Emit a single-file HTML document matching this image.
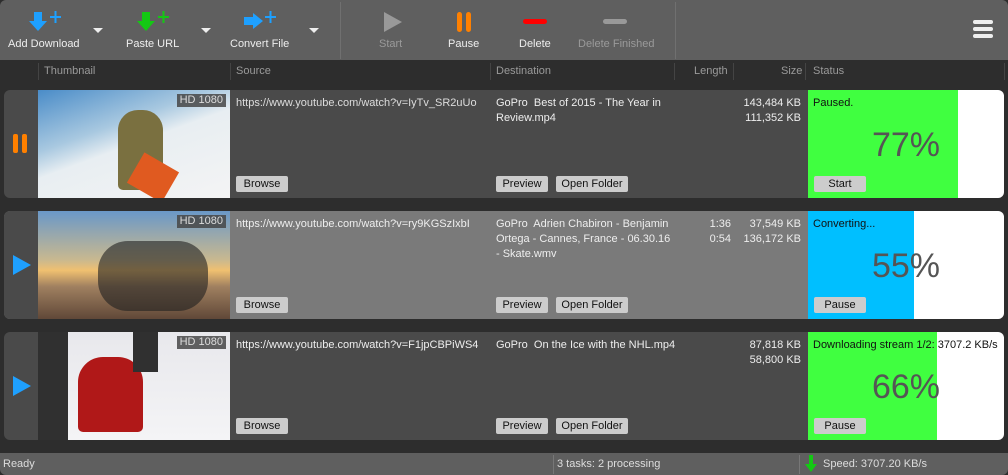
<!DOCTYPE html><html><head><style>
body{margin:0;width:1008px;height:475px;background:#2d2d2d;font-family:"Liberation Sans",sans-serif;font-size:11px;position:relative;overflow:hidden}
.a{position:absolute}
.tb{left:0;top:0;width:1008px;height:60px;background:#5f5f5f;border-radius:6px 6px 0 0}
.lbl{position:absolute;top:38px;color:#eee;font-size:11px;text-align:center}
.dis{color:#9a9a9a}
.hd{color:#9a9a9a;top:65px;font-size:11px}
.sep{position:absolute;top:63px;width:1px;height:17px;background:#444}
.row{left:4px;width:1000px;height:108px;border-radius:6px;overflow:hidden;background:#4a4a4a}
.row>div{position:absolute}
.thumb{left:34px;top:0;width:192px;height:108px}
.hdb{position:absolute;right:4px;top:4px;background:rgba(70,70,70,.85);color:#ddd;font-size:11px;padding:0 3px;line-height:13px}
.txt{color:#eee;font-size:11px;line-height:15px}
.btn{position:absolute;background:#ccc;color:#111;font-size:11px;height:16px;line-height:16px;text-align:center;border-radius:2px}
.st{left:804px;top:0;width:196px;height:108px;background:#fff}
.pct{position:absolute;left:0;width:196px;top:36px;text-align:center;font-size:34px;color:#555}
</style></head><body>
<div class="a tb"></div>
<svg class="a" style="left:0;top:0" width="700" height="60">
<g fill="#1ea0ff"><rect x="34" y="12" width="8" height="10"/><polygon points="29,21 47,21 38,31"/><rect x="50" y="16" width="11" height="2"/><rect x="54.5" y="11" width="2" height="12"/></g>
<g fill="#14c814"><rect x="142" y="12" width="8" height="10"/><polygon points="137,21 155,21 146,31"/><rect x="158" y="16" width="11" height="2"/><rect x="162.5" y="11" width="2" height="12"/></g>
<g fill="#1ea0ff"><rect x="244" y="17" width="10" height="8"/><polygon points="253,13 263,21 253,29"/><rect x="265" y="16" width="11" height="2"/><rect x="269.5" y="11" width="2" height="12"/></g>
<g fill="#eee"><polygon points="93,28 103,28 98,33"/><polygon points="201,28 211,28 206,33"/><polygon points="309,28 319,28 314,33"/></g>
<rect x="340" y="2" width="1" height="57" fill="#707070"/><rect x="675" y="2" width="1" height="57" fill="#707070"/>
<polygon points="384,12 402,22 384,32" fill="#999"/>
<rect x="457" y="12" width="5" height="20" rx="2.5" fill="#ff8000"/><rect x="466" y="12" width="5" height="20" rx="2.5" fill="#ff8000"/>
<rect x="523" y="19" width="24" height="5" rx="2.5" fill="#f00"/>
<rect x="603" y="19" width="24" height="5" rx="2.5" fill="#999"/>
<circle cx="707" cy="30" r="3" fill="#eee"/><circle cx="716" cy="30" r="3" fill="#eee"/><circle cx="725" cy="30" r="3" fill="#eee"/>
</svg>
<svg class="a" style="left:970px;top:18px" width="30" height="24"><rect x="3" y="2" width="20" height="4" rx="2" fill="#eee"/><rect x="3" y="9" width="20" height="4" rx="2" fill="#eee"/><rect x="3" y="16" width="20" height="4" rx="2" fill="#eee"/></svg>
<div class="lbl" style="left:8px">Add Download</div>
<div class="lbl" style="left:126px">Paste URL</div>
<div class="lbl" style="left:230px">Convert File</div>
<div class="lbl dis" style="left:379px">Start</div>
<div class="lbl" style="left:448px">Pause</div>
<div class="lbl" style="left:519px">Delete</div>
<div class="lbl dis" style="left:578px">Delete Finished</div>
<div class="sep" style="left:38px"></div><div class="sep" style="left:230px"></div><div class="sep" style="left:490px"></div><div class="sep" style="left:674px"></div><div class="sep" style="left:733px"></div><div class="sep" style="left:805px"></div><div class="sep" style="left:1004px"></div>
<div class="a hd" style="left:44px">Thumbnail</div><div class="a hd" style="left:236px">Source</div><div class="a hd" style="left:496px">Destination</div><div class="a hd" style="left:694px">Length</div><div class="a hd" style="left:781px">Size</div><div class="a hd" style="left:813px">Status</div>

<div class="a row" style="top:90px">
<div style="left:9px;top:44px;width:5px;height:19px;background:#ff8000;border-radius:2px"></div><div style="left:18px;top:44px;width:5px;height:19px;background:#ff8000;border-radius:2px"></div>
<div class="thumb" style="background:linear-gradient(160deg,#4a8cc8 0%,#a8c8e0 35%,#e8eef2 50%,#f4f4f4 100%)"><div style="position:absolute;left:80px;top:20px;width:45px;height:80px;background:#7a7040;border-radius:20px 20px 5px 5px"></div><div style="position:absolute;left:95px;top:70px;width:40px;height:35px;background:#e05a20;transform:rotate(30deg)"></div><div class="hdb">HD 1080</div></div>
<div class="txt" style="left:232px;top:6px;color:#ddd">https://www.youtube.com/watch?v=IyTv_SR2uUo</div>
<div class="txt" style="left:492px;top:6px;width:176px">GoPro&nbsp; Best of 2015 - The Year in Review.mp4</div>
<div class="txt" style="left:730px;top:6px;width:67px;text-align:right">143,484 KB<br>111,352 KB</div>
<div class="btn" style="left:232px;top:86px;width:52px">Browse</div>
<div class="btn" style="left:492px;top:86px;width:52px">Preview</div><div class="btn" style="left:552px;top:86px;width:72px">Open Folder</div>
<div class="st"><div style="position:absolute;left:0;top:0;width:150px;height:108px;background:#40ff40"></div><div class="txt" style="position:absolute;left:5px;top:6px;color:#111">Paused.</div><div class="pct">77%</div><div class="btn" style="left:6px;top:86px;width:52px">Start</div></div>
</div>
<div class="a row" style="top:211px;background:#7a7a7a">
<div style="left:0;top:0;width:34px;height:108px;background:#4a4a4a"></div>
<svg style="position:absolute;left:8px;top:44px" width="20" height="20"><polygon points="1,0 19,10 1,20" fill="#1ea0ff"/></svg>
<div class="thumb" style="background:linear-gradient(180deg,#6a98c8 0%,#c8b890 45%,#f0c070 55%,#a08060 70%,#604838 100%)"><div style="position:absolute;left:60px;top:30px;width:110px;height:70px;background:#202020;opacity:.6;border-radius:30px"></div><div class="hdb">HD 1080</div></div>
<div class="txt" style="left:232px;top:6px">https://www.youtube.com/watch?v=ry9KGSzIxbI</div>
<div class="txt" style="left:492px;top:6px;width:176px">GoPro&nbsp; Adrien Chabiron - Benjamin Ortega - Cannes, France - 06.30.16 - Skate.wmv</div>
<div class="txt" style="left:690px;top:6px;width:37px;text-align:right">1:36<br>0:54</div>
<div class="txt" style="left:730px;top:6px;width:67px;text-align:right">37,549 KB<br>136,172 KB</div>
<div class="btn" style="left:232px;top:86px;width:52px">Browse</div>
<div class="btn" style="left:492px;top:86px;width:52px">Preview</div><div class="btn" style="left:552px;top:86px;width:72px">Open Folder</div>
<div class="st"><div style="position:absolute;left:0;top:0;width:106px;height:108px;background:#00bfff"></div><div class="txt" style="position:absolute;left:5px;top:6px;color:#111">Converting...</div><div class="pct">55%</div><div class="btn" style="left:6px;top:86px;width:52px">Pause</div></div>
</div>
<div class="a row" style="top:332px">
<svg style="position:absolute;left:8px;top:44px" width="20" height="20"><polygon points="1,0 19,10 1,20" fill="#1ea0ff"/></svg>
<div class="thumb" style="background:linear-gradient(180deg,#e8e8ec,#f4f4f6)"><div style="position:absolute;left:0;top:0;width:30px;height:108px;background:#303030"></div><div style="position:absolute;left:40px;top:25px;width:65px;height:75px;background:#b01818;border-radius:25px 25px 5px 5px"></div><div style="position:absolute;left:95px;top:0;width:25px;height:40px;background:#303030"></div><div class="hdb">HD 1080</div></div>
<div class="txt" style="left:232px;top:6px">https://www.youtube.com/watch?v=F1jpCBPiWS4</div>
<div class="txt" style="left:492px;top:6px;width:185px">GoPro&nbsp; On the Ice with the NHL.mp4</div>
<div class="txt" style="left:730px;top:6px;width:67px;text-align:right">87,818 KB<br>58,800 KB</div>
<div class="btn" style="left:232px;top:86px;width:52px">Browse</div>
<div class="btn" style="left:492px;top:86px;width:52px">Preview</div><div class="btn" style="left:552px;top:86px;width:72px">Open Folder</div>
<div class="st"><div style="position:absolute;left:0;top:0;width:129px;height:108px;background:#40ff40"></div><div class="txt" style="position:absolute;left:5px;top:6px;color:#111;white-space:nowrap">Downloading stream 1/2: 3707.2 KB/s</div><div class="pct">66%</div><div class="btn" style="left:6px;top:86px;width:52px">Pause</div></div>
</div>
<div class="a" style="left:0;top:453px;width:1008px;height:22px;background:#5f5f5f;border-radius:0 0 6px 6px"></div>
<div class="a" style="left:553px;top:455px;width:1px;height:19px;background:#777"></div><div class="a" style="left:799px;top:455px;width:1px;height:19px;background:#777"></div>
<div class="a txt" style="left:3px;top:457px;color:#ddd">Ready</div>
<div class="a txt" style="left:557px;top:457px;color:#ddd">3 tasks: 2 processing</div>
<svg class="a" style="left:805px;top:455px" width="12" height="18"><rect x="4" y="0" width="4" height="10" fill="#14c814"/><polygon points="0,9 12,9 6,17" fill="#14c814"/></svg>
<div class="a txt" style="left:823px;top:457px;color:#ddd">Speed: 3707.20 KB/s</div>
</body></html>
